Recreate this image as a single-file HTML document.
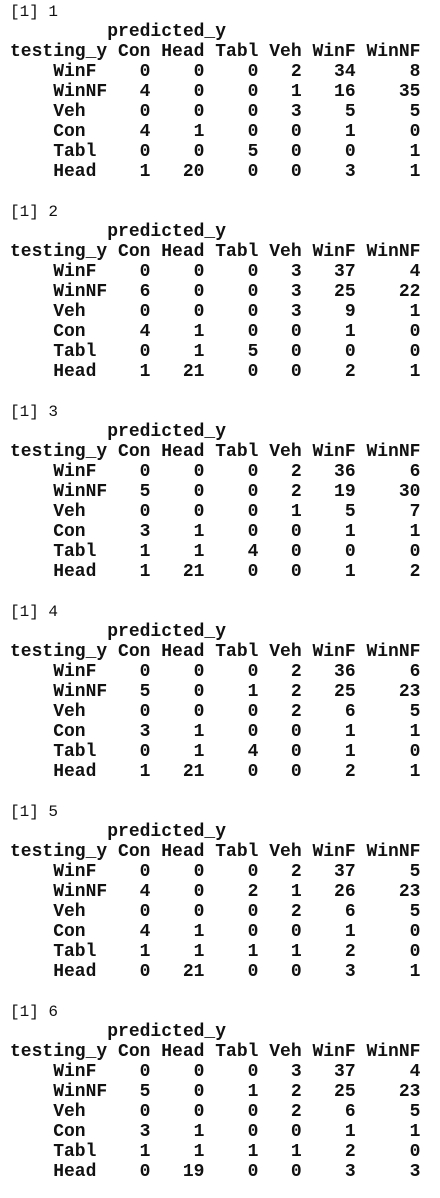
<!DOCTYPE html>
<html><head><meta charset="utf-8"><style>
html,body{margin:0;padding:0;background:#fff;width:440px;height:1198px;overflow:hidden}
pre{margin:2px 0 0 10px;font-family:"Liberation Mono",monospace;font-size:18px;line-height:20px;color:#111;font-weight:bold}
.n{font-weight:normal;font-size:16px}
</style></head><body><pre><span class="n">[1] 1</span>
         predicted_y
testing_y Con Head Tabl Veh WinF WinNF
    WinF    0    0    0   2   34     8
    WinNF   4    0    0   1   16    35
    Veh     0    0    0   3    5     5
    Con     4    1    0   0    1     0
    Tabl    0    0    5   0    0     1
    Head    1   20    0   0    3     1

<span class="n">[1] 2</span>
         predicted_y
testing_y Con Head Tabl Veh WinF WinNF
    WinF    0    0    0   3   37     4
    WinNF   6    0    0   3   25    22
    Veh     0    0    0   3    9     1
    Con     4    1    0   0    1     0
    Tabl    0    1    5   0    0     0
    Head    1   21    0   0    2     1

<span class="n">[1] 3</span>
         predicted_y
testing_y Con Head Tabl Veh WinF WinNF
    WinF    0    0    0   2   36     6
    WinNF   5    0    0   2   19    30
    Veh     0    0    0   1    5     7
    Con     3    1    0   0    1     1
    Tabl    1    1    4   0    0     0
    Head    1   21    0   0    1     2

<span class="n">[1] 4</span>
         predicted_y
testing_y Con Head Tabl Veh WinF WinNF
    WinF    0    0    0   2   36     6
    WinNF   5    0    1   2   25    23
    Veh     0    0    0   2    6     5
    Con     3    1    0   0    1     1
    Tabl    0    1    4   0    1     0
    Head    1   21    0   0    2     1

<span class="n">[1] 5</span>
         predicted_y
testing_y Con Head Tabl Veh WinF WinNF
    WinF    0    0    0   2   37     5
    WinNF   4    0    2   1   26    23
    Veh     0    0    0   2    6     5
    Con     4    1    0   0    1     0
    Tabl    1    1    1   1    2     0
    Head    0   21    0   0    3     1

<span class="n">[1] 6</span>
         predicted_y
testing_y Con Head Tabl Veh WinF WinNF
    WinF    0    0    0   3   37     4
    WinNF   5    0    1   2   25    23
    Veh     0    0    0   2    6     5
    Con     3    1    0   0    1     1
    Tabl    1    1    1   1    2     0
    Head    0   19    0   0    3     3
</pre></body></html>
